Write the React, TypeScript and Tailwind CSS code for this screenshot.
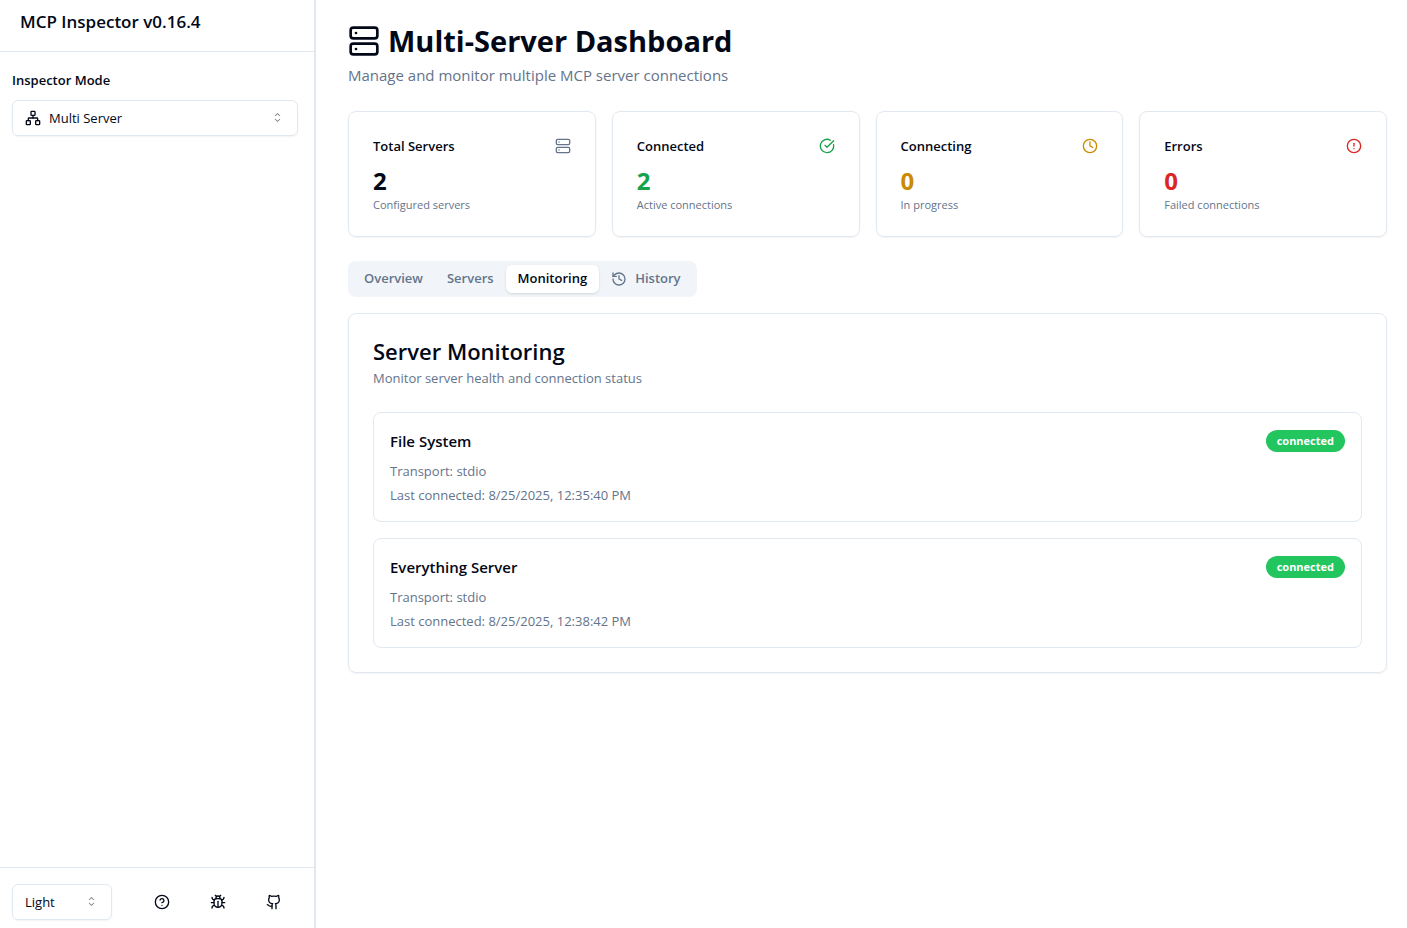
import React from "react";
import {
  Bug,
  CircleAlert,
  CircleCheckBig,
  CircleQuestionMark,
  Clock,
  Github,
  History,
  Network,
  Server,
  type LucideIcon,
} from "lucide-react";

function CaretSort({ className }: { className?: string }) {
  return (
    <svg className={className} width="15" height="15" viewBox="0 0 15 15" fill="none" aria-hidden="true">
      <path
        d="M4.93179 5.43179C4.75605 5.60753 4.75605 5.89245 4.93179 6.06819C5.10753 6.24392 5.39245 6.24392 5.56819 6.06819L7.49999 4.13638L9.43179 6.06819C9.60753 6.24392 9.89245 6.24392 10.0682 6.06819C10.2439 5.89245 10.2439 5.60753 10.0682 5.43179L7.81819 3.18179C7.73379 3.0974 7.61933 3.04999 7.49999 3.04999C7.38064 3.04999 7.26618 3.0974 7.18179 3.18179L4.93179 5.43179ZM10.0682 9.56819C10.2439 9.39245 10.2439 9.10753 10.0682 8.93179C9.89245 8.75606 9.60753 8.75606 9.43179 8.93179L7.49999 10.8636L5.56819 8.93179C5.39245 8.75606 5.10753 8.75606 4.93179 8.93179C4.75605 9.10753 4.75605 9.39245 4.93179 9.56819L7.18179 11.8182C7.35753 11.9939 7.64245 11.9939 7.81819 11.8182L10.0682 9.56819Z"
        fill="currentColor"
        fillRule="evenodd"
        clipRule="evenodd"
      />
    </svg>
  );
}

type Stat = { title: string; value: number; caption: string; icon: LucideIcon; iconColor: string; valueColor: string };

const stats: Stat[] = [
  { title: "Total Servers", value: 2, caption: "Configured servers", icon: Server, iconColor: "text-[#64748b]", valueColor: "text-[#020817]" },
  { title: "Connected", value: 2, caption: "Active connections", icon: CircleCheckBig, iconColor: "text-[#16a34a]", valueColor: "text-[#16a34a]" },
  { title: "Connecting", value: 0, caption: "In progress", icon: Clock, iconColor: "text-[#ca8a04]", valueColor: "text-[#ca8a04]" },
  { title: "Errors", value: 0, caption: "Failed connections", icon: CircleAlert, iconColor: "text-[#dc2626]", valueColor: "text-[#dc2626]" },
];

const tabs: { label: string; icon?: LucideIcon }[] = [
  { label: "Overview" },
  { label: "Servers" },
  { label: "Monitoring" },
  { label: "History", icon: History },
];

const servers = [
  { name: "File System", transport: "stdio", last: "8/25/2025, 12:35:40 PM" },
  { name: "Everything Server", transport: "stdio", last: "8/25/2025, 12:38:42 PM" },
];

const links: { label: string; href: string; icon: LucideIcon }[] = [
  { label: "Documentation", href: "#docs", icon: CircleQuestionMark },
  { label: "Report a bug", href: "#bugs", icon: Bug },
  { label: "Source code", href: "#source", icon: Github },
];

function Sidebar() {
  return (
    <aside className="flex w-[316px] shrink-0 flex-col border-r-2 border-[#e2e8f0]">
      <div className="border-b border-[#e2e8f0] px-5 pt-2 pb-[15px]">
        <h1 className="text-[17px] leading-7 font-semibold">MCP Inspector v0.16.4</h1>
      </div>
      <div className="flex flex-1 flex-col gap-[10px] pt-[18px] pr-4 pb-5 pl-3">
        <label htmlFor="mode" className="text-[13px] leading-5 font-semibold">
          Inspector Mode
        </label>
        <div className="relative">
          <Network className="pointer-events-none absolute top-[10px] left-[13px] size-4" />
          <select
            id="mode"
            className="h-9 w-full appearance-none rounded-md border border-[#e2e8f0] bg-transparent pt-[2px] pr-8 pl-9 text-[13px] shadow-xs"
          >
            <option>Multi Server</option>
            <option>Single Server</option>
          </select>
          <CaretSort className="pointer-events-none absolute top-[10px] right-[13px] opacity-50" />
        </div>
      </div>
      <div className="flex items-center gap-8 border-t border-[#e2e8f0] px-3 pt-4 pb-2">
        <div className="relative">
          <select
            aria-label="Theme"
            className="h-9 w-[100px] appearance-none rounded-md border border-[#e2e8f0] bg-transparent pt-[2px] pr-8 pl-3 text-[13px] shadow-xs"
          >
            <option>Light</option>
            <option>Dark</option>
            <option>System</option>
          </select>
          <CaretSort className="pointer-events-none absolute top-[10px] right-[13px] opacity-50" />
        </div>
        <nav className="flex gap-5">
          {links.map(({ label, href, icon: Icon }) => (
            <a key={label} href={href} aria-label={label} className="flex size-9 items-center justify-center rounded-md">
              <Icon className="size-4" />
            </a>
          ))}
        </nav>
      </div>
    </aside>
  );
}

function StatCard({ title, value, caption, icon: Icon, iconColor, valueColor }: Stat) {
  return (
    <section className="rounded-lg border border-[#e2e8f0] px-6 pt-6 pb-[23px] shadow-xs">
      <div className="flex items-center justify-between pb-[9px]">
        <h3 className="text-[13px] leading-5 font-semibold">{title}</h3>
        <Icon className={`size-4 ${iconColor}`} />
      </div>
      <div className={`text-2xl leading-8 font-bold ${valueColor}`}>{value}</div>
      <p className="text-[11px] leading-4 text-[#64748b]">{caption}</p>
    </section>
  );
}

export default function App() {
  return (
    <div className="flex min-h-screen bg-white font-['Open_Sans','Noto_Sans',sans-serif] text-[#020817]">
      <Sidebar />
      <main className="min-w-0 flex-1 pt-[23px] pr-5 pb-6 pl-8">
        <header>
          <h2 className="flex items-center gap-2 text-[29px] leading-9 font-bold">
            <Server className="size-8" />
            Multi-Server Dashboard
          </h2>
          <p className="mt-1 text-[15px] leading-6 text-[#64748b]">Manage and monitor multiple MCP server connections</p>
        </header>

        <div className="mt-6 grid grid-cols-4 gap-4">
          {stats.map((s) => (
            <StatCard key={s.title} {...s} />
          ))}
        </div>

        <div role="tablist" className="mt-6 inline-flex h-9 items-center rounded-lg bg-[#f1f5f9] p-1 text-[#64748b]">
          {tabs.map(({ label, icon: Icon }) => {
            const active = label === "Monitoring";
            return (
              <button
                key={label}
                type="button"
                role="tab"
                aria-selected={active}
                className={`flex h-7 items-center gap-2 rounded-md px-3 text-[13px] font-semibold ${
                  active ? "bg-white text-[#020817] shadow-sm" : ""
                }`}
              >
                {Icon && <Icon className="size-4" />}
                {label}
              </button>
            );
          })}
        </div>

        <section className="mt-4 rounded-lg border border-[#e2e8f0] p-6 shadow-xs">
          <h3 className="text-[22px] leading-[26px] font-semibold">Server Monitoring</h3>
          <p className="mt-1 text-[13px] leading-5 text-[#64748b]">Monitor server health and connection status</p>
          <ul className="mt-6 flex flex-col gap-4">
            {servers.map((s) => (
              <li key={s.name} className="rounded-lg border border-[#e2e8f0] p-4">
                <div className="flex items-center justify-between">
                  <h4 className="text-[15px] leading-6 font-semibold">{s.name}</h4>
                  <span className="rounded-full bg-[#22c55e] px-[11px] py-[3px] text-[11px] leading-4 font-bold text-white">
                    connected
                  </span>
                </div>
                <div className="mt-2 flex flex-col gap-1 text-[13px] leading-5 text-[#64748b]">
                  <p>Transport: {s.transport}</p>
                  <p>Last connected: {s.last}</p>
                </div>
              </li>
            ))}
          </ul>
        </section>
      </main>
    </div>
  );
}
